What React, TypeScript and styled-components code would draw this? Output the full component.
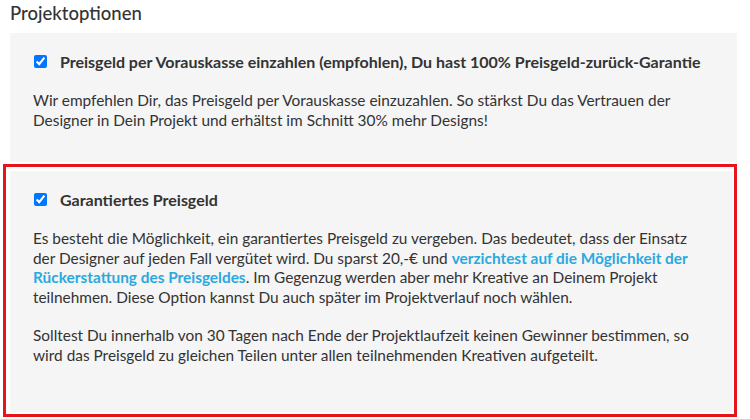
import React, { useState } from 'react'
import styled, { createGlobalStyle } from 'styled-components'

const GlobalStyle = createGlobalStyle`
  body {
    margin: 0;
    background: #ffffff;
    font-family: Lato, "Open Sans", sans-serif;
    color: #333333;
  }
`

const Page = styled.div`
  width: 727px;
  padding: 2px 0 0 10px;
`

const Title = styled.h2`
  margin: 0 0 9px;
  font-size: 18.5px;
  font-weight: 500;
  line-height: 22px;
  color: #333333;
`

const Highlight = styled.div`
  margin: 2px 0 0 -7px;
  border: 3px solid #e8141c;
  padding: 4px 1px 2px 4px;
`

const OptionBox = styled.div<{ $bottom: number }>`
  background: #f5f5f5;
  padding: 19px 28px ${({ $bottom }) => $bottom}px 23px;
`

const OptionLabel = styled.label`
  display: flex;
  align-items: center;
  gap: 13px;
  font-size: 16px;
  font-weight: 700;
  line-height: 19px;
  color: #333333;
  cursor: pointer;
`

const Checkbox = styled.input`
  width: 13px;
  height: 13px;
  margin: 0 0 0 1px;
  flex-shrink: 0;
`

const Body = styled.div`
  margin-top: 20px;
`

const Paragraph = styled.p`
  margin: 0 0 19px;
  font-size: 15.4px;
  line-height: 19.5px;
  color: #333333;

  &:last-child {
    margin-bottom: 0;
  }
`

const Link = styled.a`
  color: #2aa9df;
  font-weight: 700;
  text-decoration: none;
`

type OptionProps = {
  label: string
  bottom: number
  children: React.ReactNode
}

const Option = ({ label, bottom, children }: OptionProps) => {
  const [checked, setChecked] = useState(true)

  return (
    <OptionBox $bottom={bottom}>
      <OptionLabel>
        <Checkbox type="checkbox" checked={checked} onChange={() => setChecked(!checked)} />
        {label}
      </OptionLabel>
      <Body>{children}</Body>
    </OptionBox>
  )
}

const App = () => {
  return (
    <Page>
      <GlobalStyle />
      <Title>Projektoptionen</Title>
      <Option
        label="Preisgeld per Vorauskasse einzahlen (empfohlen), Du hast 100% Preisgeld-zurück-Garantie"
        bottom={32}
      >
        <Paragraph>
          Wir empfehlen Dir, das Preisgeld per Vorauskasse einzuzahlen. So stärkst Du das Vertrauen der
          Designer in Dein Projekt und erhältst im Schnitt 30% mehr Designs!
        </Paragraph>
      </Option>
      <Highlight>
        <Option label="Garantiertes Preisgeld" bottom={47}>
          <Paragraph>
            Es besteht die Möglichkeit, ein garantiertes Preisgeld zu vergeben. Das bedeutet, dass der Einsatz
            der Designer auf jeden Fall vergütet wird. Du sparst 20,-€ und{' '}
            <Link href="#">verzichtest auf die Möglichkeit der Rückerstattung des Preisgeldes</Link>. Im Gegenzug
            werden aber mehr Kreative an Deinem Projekt teilnehmen. Diese Option kannst Du auch später im
            Projektverlauf noch wählen.
          </Paragraph>
          <Paragraph>
            Solltest Du innerhalb von 30 Tagen nach Ende der Projektlaufzeit keinen Gewinner bestimmen, so
            wird das Preisgeld zu gleichen Teilen unter allen teilnehmenden Kreativen aufgeteilt.
          </Paragraph>
        </Option>
      </Highlight>
    </Page>
  )
}

export default App
